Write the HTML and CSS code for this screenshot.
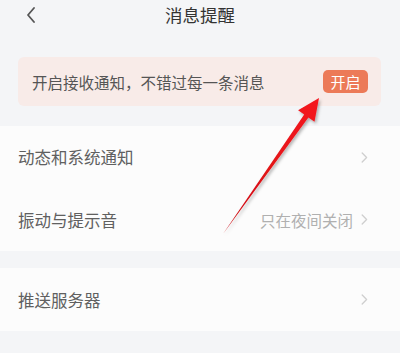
FILE: index.html
```html
<!DOCTYPE html>
<html lang="zh">
<head>
<meta charset="utf-8">
<link rel="stylesheet" href="styles.css">
</head>
<body>
<div class="page">
  <header class="header">
    <svg class="back" width="10" height="16" viewBox="0 0 10 16"><path d="M8 1 L2 8 L8 15" fill="none" stroke="#555" stroke-width="1.8" stroke-linecap="round" stroke-linejoin="round"/></svg>
    <div class="title">消息提醒</div>
  </header>
  <div class="banner">
    <span class="banner-text">开启接收通知，不错过每一条消息</span>
    <span class="btn">开启</span>
  </div>
  <div class="group group-first">
    <div class="row">
      <span class="label">动态和系统通知</span>
      <span class="right"><svg class="chev" width="7" height="11" viewBox="0 0 7 11"><path d="M1.2 1 L5.6 5.5 L1.2 10" fill="none" stroke="#cfcfcf" stroke-width="1.3" stroke-linecap="round" stroke-linejoin="round"/></svg></span>
    </div>
    <div class="row">
      <span class="label">振动与提示音</span>
      <span class="right"><span class="value">只在夜间关闭</span><svg class="chev" width="7" height="11" viewBox="0 0 7 11"><path d="M1.2 1 L5.6 5.5 L1.2 10" fill="none" stroke="#cfcfcf" stroke-width="1.3" stroke-linecap="round" stroke-linejoin="round"/></svg></span>
    </div>
  </div>
  <div class="group group-second">
    <div class="row row-last">
      <span class="label">推送服务器</span>
      <span class="right"><svg class="chev" width="7" height="11" viewBox="0 0 7 11"><path d="M1.2 1 L5.6 5.5 L1.2 10" fill="none" stroke="#cfcfcf" stroke-width="1.3" stroke-linecap="round" stroke-linejoin="round"/></svg></span>
    </div>
  </div>
  <svg class="arrow" width="400" height="353" viewBox="0 0 400 353">
    <defs>
      <linearGradient id="ag" x1="223" y1="234" x2="319" y2="98" gradientUnits="userSpaceOnUse">
        <stop offset="0" stop-color="#c80d12"/>
        <stop offset="0.6" stop-color="#e8141a"/>
        <stop offset="1" stop-color="#f5141c"/>
      </linearGradient>
      <filter id="sh" x="-20%" y="-20%" width="140%" height="140%">
        <feDropShadow dx="1.5" dy="2" stdDeviation="1.6" flood-color="#000" flood-opacity="0.3"/>
      </filter>
    </defs>
    <polygon points="319,98 314.5,121.8 308.4,117.5 223,234 304.2,114.6 298.1,110.2" fill="url(#ag)" filter="url(#sh)"/>
  </svg>
</div>
</body>
</html>
```
FILE: styles.css
```css
html, body {
  margin: 0;
  padding: 0;
}
body {
  background: #f4f5f7;
  font-family: "Noto Sans CJK SC", "Noto Sans", sans-serif;
}
.page {
  position: relative;
  width: 400px;
  height: 353px;
  overflow: hidden;
  background: #f4f5f7;
}
.header {
  position: relative;
  height: 30px;
  display: flex;
  align-items: center;
  justify-content: center;
}
.back {
  position: absolute;
  left: 26px;
  top: 7px;
}
.title {
  font-size: 17.5px;
  color: #333;
  line-height: 30px;
}
.banner {
  margin: 27px 19px 0 18px;
  height: 49px;
  background: #f8ebe8;
  border-radius: 6px;
  display: flex;
  align-items: center;
  justify-content: space-between;
  padding: 0 13px 0 14px;
}
.banner-text {
  font-size: 15.5px;
  color: #555;
}
.btn {
  width: 45px;
  height: 23px;
  line-height: 23px;
  text-align: center;
  background: #ec7a58;
  color: #fff;
  border-radius: 5px;
  font-size: 15px;
}
.group {
  background: #fcfcfc;
}
.group-first {
  margin-top: 20px;
}
.group-second {
  margin-top: 17px;
}
.row {
  height: 62.5px;
  display: flex;
  align-items: center;
  justify-content: space-between;
  padding: 0 32px 0 18px;
}
.row-last {
  height: 63px;
}
.label {
  font-size: 16.5px;
  color: #606060;
}
.right {
  display: flex;
  align-items: center;
  gap: 8px;
}
.value {
  font-size: 15.5px;
  color: #b0b0b0;
}
.chev {
  display: block;
}
.arrow {
  position: absolute;
  left: 0;
  top: 0;
  pointer-events: none;
}
```
